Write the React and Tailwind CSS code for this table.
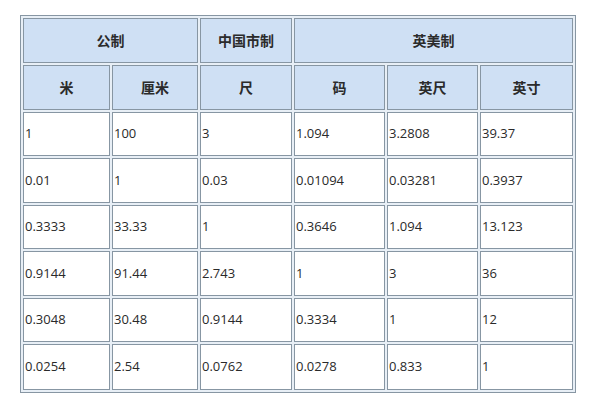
import React from 'react';

const rows = [
  ['1', '100', '3', '1.094', '3.2808', '39.37'],
  ['0.01', '1', '0.03', '0.01094', '0.03281', '0.3937'],
  ['0.3333', '33.33', '1', '0.3646', '1.094', '13.123'],
  ['0.9144', '91.44', '2.743', '1', '3', '36'],
  ['0.3048', '30.48', '0.9144', '0.3334', '1', '12'],
  ['0.0254', '2.54', '0.0762', '0.0278', '0.833', '1'],
];

const rowHeights = ['h-[44px]', 'h-[45px]', 'h-[44px]', 'h-[45px]', 'h-[44px]', 'h-[46px]'];

const cjk = { fontFamily: '"Noto Sans CJK SC", "Noto Sans", sans-serif' };

export default function App() {
  const head = 'border border-[#8796a3] bg-[#cfe0f4] text-center text-[14px] font-bold text-[#2b2b2b] p-0';
  const cell = 'border border-[#8796a3] bg-white text-left text-[13px] text-[#2a2a2a] p-0 pl-px';

  return (
    <div className="w-[600px] h-[400px] bg-white pt-[15px] pl-[20px]" style={cjk}>
      <table className="w-[556px] table-fixed border-separate border-spacing-[2px] border border-[#8796a3] bg-[#e8eff6]">
        <colgroup>
          <col className="w-[87px]" />
          <col className="w-[86px]" />
          <col className="w-[92px]" />
          <col className="w-[91px]" />
          <col className="w-[91px]" />
          <col className="w-[93px]" />
        </colgroup>
        <thead>
          <tr>
            <th colSpan={2} className={`${head} h-[45px]`}>公制</th>
            <th className={`${head} h-[45px]`}>中国市制</th>
            <th colSpan={3} className={`${head} h-[45px]`}>英美制</th>
          </tr>
          <tr>
            {['米', '厘米', '尺', '码', '英尺', '英寸'].map((t) => (
              <th key={t} className={`${head} h-[45px]`}>{t}</th>
            ))}
          </tr>
        </thead>
        <tbody>
          {rows.map((r, i) => (
            <tr key={i}>
              {r.map((v, j) => (
                <td
                  key={j}
                  className={`${cell} ${rowHeights[i]} font-['Open_Sans',sans-serif]`}
                >
                  {v}
                </td>
              ))}
            </tr>
          ))}
        </tbody>
      </table>
    </div>
  );
}
